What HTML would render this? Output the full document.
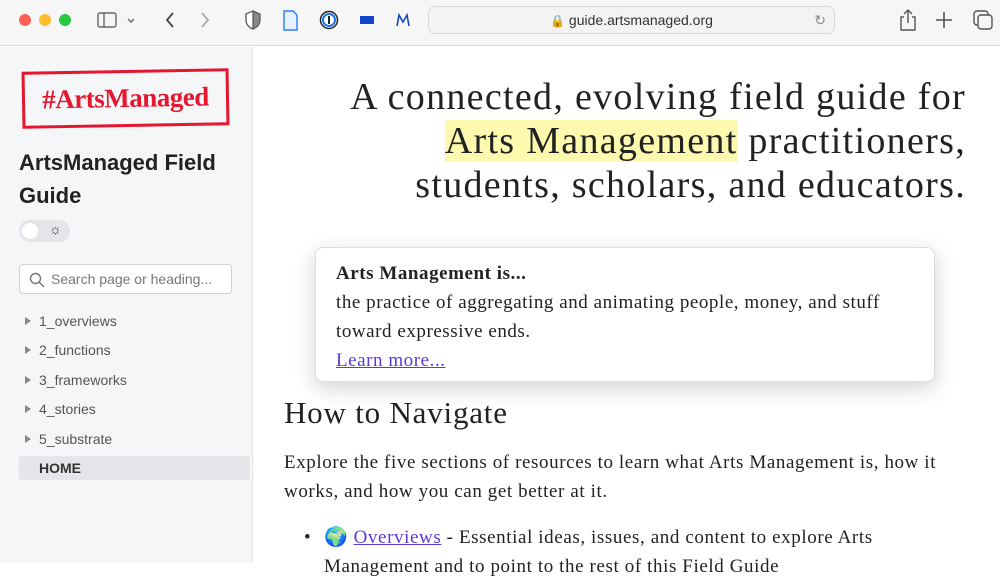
<!DOCTYPE html>
<html><head><meta charset="utf-8"><style>
*{margin:0;padding:0;box-sizing:border-box}
body{width:1000px;height:563px;overflow:hidden;background:#fff;font-family:"Liberation Sans",sans-serif;position:relative}
.tb{position:absolute;left:0;top:0;width:1000px;height:46px;background:#f6f6f6;border-bottom:1px solid #dcdcdc}
.dot{position:absolute;top:14px;width:12px;height:12px;border-radius:50%}
.url{position:absolute;left:428px;top:6px;width:407px;height:28px;border:1px solid #d8d8d8;border-radius:7px;background:#f3f3f3;font-size:14px;color:#333;text-align:center;line-height:26px}
.side{position:absolute;left:0;top:47px;width:253px;height:516px;background:#f5f6f8;border-right:1px solid #e4e4e6}
.logo{position:absolute;left:22px;top:23px;width:207px;height:57px;border:3px solid #e5162f;transform:rotate(-1deg);color:#e5162f;font-family:"Liberation Serif",serif;font-weight:bold;font-size:27px;text-align:center;line-height:50px;letter-spacing:-0.5px}
.title{position:absolute;left:19px;top:99px;font-size:22px;font-weight:bold;color:#222;line-height:33px;width:230px}
.tog{position:absolute;left:19px;top:173px;width:51px;height:22px;border-radius:11px;background:#e4e5e8}
.tog i{position:absolute;left:3px;top:3px;width:16px;height:16px;border-radius:50%;background:#fff}
.search{position:absolute;left:19px;top:217px;width:213px;height:30px;border:1px solid #cfd1d4;border-radius:4px;background:#fff;font-size:14px;color:#777;padding-left:31px;line-height:28px}
.nav{position:absolute;left:19px;font-size:14px;color:#555;padding-left:20px}
.nav:before{content:"";position:absolute;left:6px;top:4px;border-left:6px solid #888;border-top:4px solid transparent;border-bottom:4px solid transparent}
.home{position:absolute;left:19px;top:409px;width:231px;height:24px;background:#e5e6e9;border-radius:2px;font-size:14px;font-weight:bold;color:#333;padding-left:20px;line-height:24px}
.main{position:absolute;left:253px;top:47px;right:0;font-family:"Liberation Serif",serif;color:#222}
h1{position:absolute;right:34px;top:28px;width:630px;text-align:right;font-weight:normal;font-size:38px;line-height:44px;letter-spacing:1.3px}
mark{background:#fdf9ae;color:#222}
.call{position:absolute;left:62px;top:200px;width:620px;height:135px;border:1px solid #ddd;border-radius:8px;box-shadow:0 6px 22px rgba(0,0,0,.18);padding:11px 20px;font-size:19px;line-height:29px;letter-spacing:0.55px}
a{color:#5b3bd8}
h2{position:absolute;left:31px;top:348px;font-weight:normal;font-size:31px;letter-spacing:0.8px}
.p{position:absolute;left:31px;top:401px;width:690px;font-size:19px;line-height:29px;letter-spacing:0.6px}
</style></head><body>
<div class="tb">
<div class="dot" style="left:19px;background:#fe5f57"></div><div class="dot" style="left:39px;background:#febc2e"></div><div class="dot" style="left:59px;background:#28c840"></div>
<svg style="position:absolute;left:97px;top:11px" width="46" height="18"><rect x="1" y="2" width="18" height="14" rx="2" fill="none" stroke="#666" stroke-width="1.4"/><line x1="7" y1="2" x2="7" y2="16" stroke="#666" stroke-width="1.4"/><path d="M31 8l3 3 3-3" fill="none" stroke="#666" stroke-width="1.4"/></svg>
<svg style="position:absolute;left:160px;top:10px" width="55" height="20"><path d="M13 3l-6 7 6 7" fill="none" stroke="#444" stroke-width="1.8"/><path d="M42 3l6 7-6 7" fill="none" stroke="#aaa" stroke-width="1.8"/></svg>
<svg style="position:absolute;left:244px;top:9px" width="170" height="22"><path d="M9 2l7 3v6c0 5-4 8-7 9-3-1-7-4-7-9V5z" fill="#888" stroke="#555" stroke-width="1.2"/><path d="M9 2v18c-3-1-7-4-7-9V5z" fill="#fff" stroke="#555" stroke-width="1.2"/><path d="M40 2h9l4 4v15H40z" fill="#e8f1ff" stroke="#2b7cf6" stroke-width="1.4"/><circle cx="85" cy="11" r="8.5" fill="#fff" stroke="#222" stroke-width="1.5"/><circle cx="85" cy="11" r="6" fill="none" stroke="#1a73e8" stroke-width="2"/><rect x="84" y="7" width="2" height="8" fill="#222"/><rect x="116" y="7" width="14" height="8" fill="#1245c8"/><path d="M153 17l2-11 4 7 4-7 2 11" fill="none" stroke="#1245c8" stroke-width="1.6"/></svg>
<div class="url"><span style="color:#888;font-size:12px">🔒</span> guide.artsmanaged.org<span style="position:absolute;right:8px;color:#888">↻</span></div>
<svg style="position:absolute;left:898px;top:8px" width="100" height="24"><path d="M6 9H3v13h14V9h-3M10 15V2M6 6l4-4 4 4" fill="none" stroke="#555" stroke-width="1.4"/><path d="M46 4v16M38 12h16" stroke="#555" stroke-width="1.6"/><rect x="76" y="3" width="14" height="14" rx="3" fill="none" stroke="#555" stroke-width="1.4"/><rect x="80" y="7" width="14" height="14" rx="3" fill="#f6f6f6" stroke="#555" stroke-width="1.4"/></svg>
</div>
<div class="side">
<div class="logo">#ArtsManaged</div>
<div class="title">ArtsManaged Field Guide</div>
<div class="tog"><i></i><span style="position:absolute;left:30px;top:1px;font-size:14px;color:#333">☼</span></div>
<div class="search"><svg style="position:absolute;left:9px;top:7px" width="16" height="16"><circle cx="6.5" cy="6.5" r="5" fill="none" stroke="#777" stroke-width="1.4"/><path d="M10 10l5 5" stroke="#777" stroke-width="1.4"/></svg>Search page or heading...</div>
<div class="nav" style="top:266px">1_overviews</div>
<div class="nav" style="top:295px">2_functions</div>
<div class="nav" style="top:325px">3_frameworks</div>
<div class="nav" style="top:354px">4_stories</div>
<div class="nav" style="top:384px">5_substrate</div>
<div class="home">HOME</div>
</div>
<div class="main">
<h1>A connected, evolving field guide for <mark>Arts Management</mark> practitioners, students, scholars, and educators.</h1>
<div class="call"><b>Arts Management is...</b><br>the practice of aggregating and animating people, money, and stuff toward expressive ends.<br><a href="#">Learn more...</a></div>
<h2>How to Navigate</h2>
<div class="p">Explore the five sections of resources to learn what Arts Management is, how it works, and how you can get better at it.
<div style="margin-top:17px;padding-left:40px;position:relative"><span style="position:absolute;left:20px">•</span>🌍 <a href="#">Overviews</a> - Essential ideas, issues, and content to explore Arts Management and to point to the rest of this Field Guide</div></div>
</div>
</body></html>
